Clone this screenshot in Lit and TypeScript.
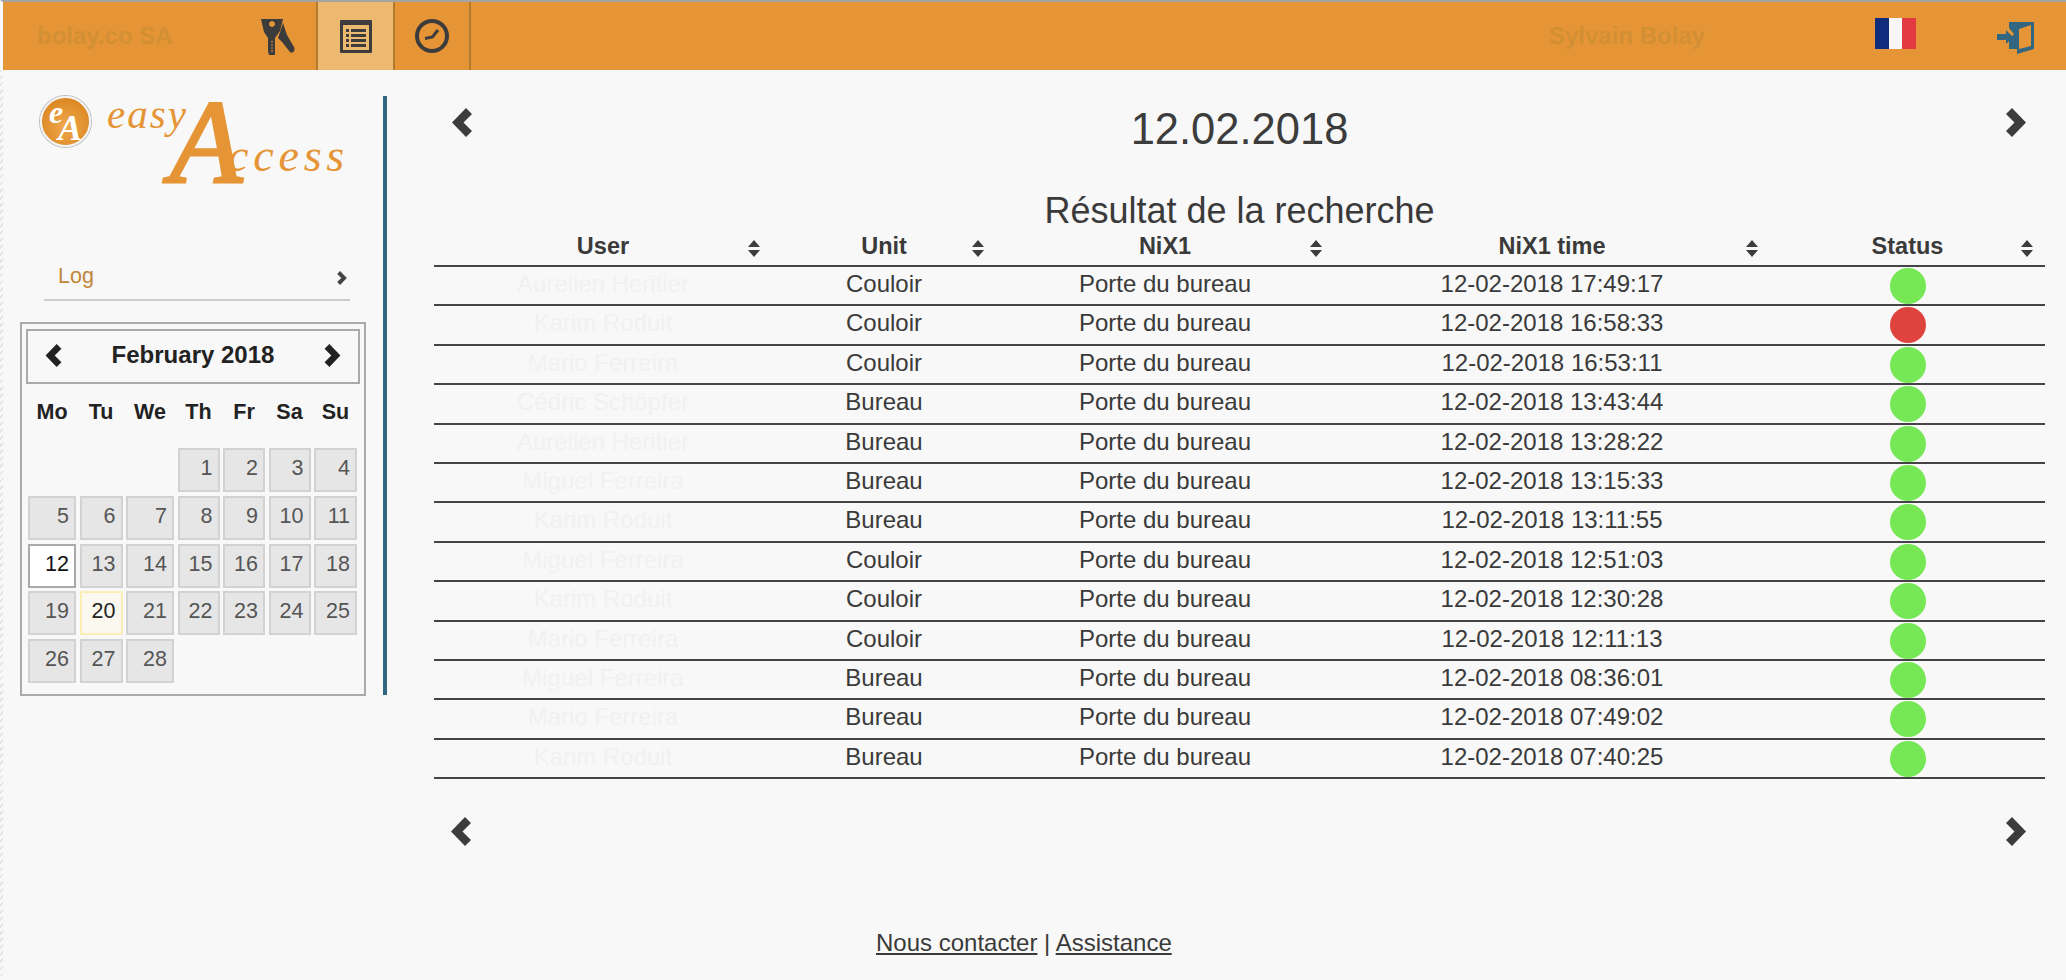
import { LitElement, html, css } from "lit";
import { customElement } from "lit/decorators.js";

const rows: [string, string, string, boolean][] = [
  ["Aurelien Heritier", "Couloir", "12-02-2018 17:49:17", true],
  ["Karim Roduit", "Couloir", "12-02-2018 16:58:33", false],
  ["Mario Ferreira", "Couloir", "12-02-2018 16:53:11", true],
  ["Cédric Schöpfer", "Bureau", "12-02-2018 13:43:44", true],
  ["Aurelien Heritier", "Bureau", "12-02-2018 13:28:22", true],
  ["Miguel Ferreira", "Bureau", "12-02-2018 13:15:33", true],
  ["Karim Roduit", "Bureau", "12-02-2018 13:11:55", true],
  ["Miguel Ferreira", "Couloir", "12-02-2018 12:51:03", true],
  ["Karim Roduit", "Couloir", "12-02-2018 12:30:28", true],
  ["Mario Ferreira", "Couloir", "12-02-2018 12:11:13", true],
  ["Miguel Ferreira", "Bureau", "12-02-2018 08:36:01", true],
  ["Mario Ferreira", "Bureau", "12-02-2018 07:49:02", true],
  ["Karim Roduit", "Bureau", "12-02-2018 07:40:25", true],
];

const chevL = (cls: string) => html`<svg class=${cls} viewBox="0 0 20 29"><path d="M0 14.5 14 0 20 6 11.5 14.5 20 23 14 29Z" fill="currentColor"/></svg>`;
const chevR = (cls: string) => html`<svg class=${cls} viewBox="0 0 20 29"><path d="M20 14.5 6 0 0 6 8.5 14.5 0 23 6 29Z" fill="currentColor"/></svg>`;
const sort = html`<svg class="sort" viewBox="0 0 14 17"><path d="M7 0 13 7H1ZM7 17 1 10H13Z" fill="#3c3c3c"/></svg>`;

@customElement("app-root")
export class AppRoot extends LitElement {
  static styles = css`
    :host { display: block; width: 2066px; height: 980px; overflow: hidden; background: #f8f8f8; font-family: "Liberation Sans", Arial, sans-serif; color: #3a3a3a; }
    .page { display: flex; flex-direction: column; height: 980px; border-top: 2px solid #a3a3a3; box-sizing: border-box; border-left: 3px solid transparent; position: relative; }
    .strip { position: absolute; left: -3px; top: 68px; bottom: 0; width: 3px; background: repeating-linear-gradient(135deg, #e6e6e6 0 2px, #f8f8f8 2px 5px); }
    .top { display: flex; height: 68px; background: #e59535; align-items: stretch; flex: none; }
    .org { width: 313px; box-sizing: border-box; padding-left: 34px; font-weight: 700; font-size: 24px; line-height: 68px; color: #d38f33; }
    .tab { width: 74px; border-right: 2px solid #b17a2e; display: flex; align-items: center; justify-content: center; }
    .tab.first { width: 0; }
    .tab.on { width: 75px; background: #ecb96e; }
    .keys { position: absolute; left: 258px; top: 16px; width: 36px; height: 38px; }
    .ico { width: 34px; height: 34px; display: block; }
    .name { margin-left: 1078px; width: 156px; white-space: nowrap; font-weight: 700; font-size: 24px; line-height: 68px; color: #d38f33; }
    .flag { margin-left: 170px; margin-top: 16px; width: 41px; height: 31px; display: flex; }
    .flag i { flex: 1; }
    .flag .b { background: #0f2d7c; }
    .flag .w { background: #f9f6f7; }
    .flag .c { background: #e23a40; }
    .exit { margin-left: 81px; margin-top: 19px; width: 38px; height: 34px; }
    .body { display: flex; flex: 1; min-height: 0; }
    .side { width: 384px; flex: none; box-sizing: border-box; height: 625px; padding-top: 26px; position: relative; }
    .bar { position: absolute; left: 380px; top: 26px; width: 4px; height: 599px; background: #336680; }
    .logo { position: relative; height: 126px; width: 360px; color: #e59535; font-family: "Liberation Serif", serif; font-style: italic; }
    .logo span { position: absolute; white-space: nowrap; line-height: 1; }
    .badge { left: 37px; top: 0; width: 51px; height: 51px; box-sizing: border-box; border-radius: 50%; background: radial-gradient(circle at 50% 60%, #f0a94e, #dd8a25 70%); border: 2px solid #f3f3f3; box-shadow: 0 0 0 1px #bdbdbd; }
    .badge-e { left: 46px; top: 0; font-size: 32px; color: #fff; font-weight: 700; }
    .badge-a { left: 55px; top: 14px; font-size: 36px; color: #fff; font-weight: 700; }
    .easy { left: 104px; top: -2px; font-size: 41px; letter-spacing: 2px; }
    .bigA { left: 167px; top: -12px; font-size: 118px; -webkit-text-stroke: 3px #e59535; }
    .ccess { left: 225px; top: 37px; font-size: 46px; letter-spacing: 4.8px; }
    .menu { margin: 25px 37px 0 41px; height: 54px; box-sizing: border-box; border-bottom: 2px solid #ccc; display: flex; justify-content: space-between; align-items: center; color: #c0873a; font-size: 21.5px; padding: 6px 3px 0 14px; }
    .menu svg { width: 10px; height: 14px; color: #444; margin-top: 4px; }
    .cal { margin: 21px 0 0 17px; width: 346px; height: 374px; box-sizing: border-box; border: 2px solid #aaa; padding: 5px 4px 0 4px; color: #222; }
    .cal-h { height: 55px; box-sizing: border-box; border: 2px solid #aaa; display: flex; align-items: center; justify-content: space-between; padding: 0 17px; font-weight: 700; font-size: 24px; }
    .cal-h span { margin-top: -4px; }
    .cal-h svg { width: 17px; height: 23px; margin-top: -2px; }
    .days { display: grid; grid-template-columns: 48px 43px 48px 42px 42px 42px 43px; column-gap: 3.5px; margin-left: 2px; }
    .wd { font-weight: 700; font-size: 21.5px; text-align: center; height: 64px; line-height: 57px; }
    .d { height: 44px; margin-bottom: 3.75px; box-sizing: border-box; background: #e6e6e6; border: 2px solid #d2d2d2; text-align: right; padding-right: 5px; font-size: 21.5px; line-height: 37px; color: #555; }
    .d.sel { background: #fff; border-color: #aaa; color: #111; }
    .d.today { background: #fbf8ef; border-color: #fbeeb4; color: #222; }
    .main { padding-left: 47px; width: 1611px; flex: none; }
    .nav { display: grid; grid-template-columns: 1fr auto 1fr; height: 98px; color: #3c3c3c; }
    .nav svg { width: 20px; height: 29px; margin: 38px 0 0 18px; }
    .nav svg.r { margin: 38px 19px 0 auto; display: block; }
    .date { font-size: 43.5px; line-height: 50px; margin-top: 34px; }
    h2 { margin: 23px 0 0; height: 0; font-weight: 400; font-size: 36px; line-height: 40px; text-align: center; color: #3a3a3a; }
    .tbl { display: block; padding-top: 43px; }
    .r { display: grid; grid-template-columns: 338px 224px 338px 436px 275px; text-align: center; font-size: 24px; }
    .hd { height: 31px; font-weight: 700; line-height: 25px; border-bottom: 2px solid #444; }
    .hd > div { position: relative; font-size: 23.5px; }
    .sort { position: absolute; width: 14px; height: 17px; top: 6px; right: 11px; }
    .row { height: 39.4px; box-sizing: border-box; border-bottom: 2px solid #444; line-height: 33px; white-space: nowrap; }
    .u { color: #f1f1f1; }
    .dot { display: block; width: 36px; height: 36px; border-radius: 50%; margin: 1px auto 0; }
    .g { background: #77e855; }
    .x { background: #de433d; }
    .pager { display: flex; justify-content: space-between; color: #3c3c3c; padding: 38px 19px 0 17px; }
    .pager svg { width: 20px; height: 29px; }
    .foot { margin: 82px 0 0 442px; font-size: 24px; line-height: 30px; white-space: nowrap; }
    .foot a { color: inherit; text-decoration: underline; }
  `;

  render() {
    const blanks = [0, 1, 2];
    const days = Array.from({ length: 28 }, (_, i) => i + 1);
    return html`<div class="page">
      <div class="strip"></div>
      <header class="top">
        <div class="org">bolay.co SA</div>
        <svg class="keys" viewBox="0 0 36 38">
          <path fill="#3c3c3c" fill-rule="evenodd" d="M0 1 22 1 19 13 14 20 14 37 8 37 7 33 7 20 3 14ZM11 3a3 3 0 1 0 .01 0Z"/>
          <path fill="#3c3c3c" d="M22 5 26 17 33 29C35 33 31 36 29 34L21 24 17 20Z"/>
          <path stroke="#e59535" stroke-width="1" d="M10 24h2M10 27h2M10 30h2M10 33h2"/>
        </svg>
        <div class="tab first"></div>
        <div class="tab on">
          <svg class="ico" viewBox="0 0 34 34"><rect x="1" y="1" width="32" height="33" rx="1" fill="#3c3c3c"/><rect x="4" y="6" width="26" height="25" fill="#ecb96e"/><path fill="#3c3c3c" d="M7 10h3v3H7zM12 10h15v3H12zM7 15h3v3H7zM12 15h15v3H12zM7 20h3v3H7zM12 20h15v3H12zM7 25h3v3H7zM12 25h15v3H12z"/></svg>
        </div>
        <div class="tab">
          <svg class="ico" viewBox="0 0 34 34"><circle cx="17" cy="17" r="15" fill="none" stroke="#3c3c3c" stroke-width="4"/><path d="M10 19.5 17.5 18 23 11" fill="none" stroke="#3c3c3c" stroke-width="3"/></svg>
        </div>
        <div class="name">Sylvain Bolay</div>
        <div class="flag"><i class="b"></i><i class="w"></i><i class="c"></i></div>
        <svg class="exit" viewBox="0 0 38 34">
          <path fill="#336680" d="M12 1H37V28L20 33V28H12V19L17 13 12 7Z"/>
          <path fill="#e59535" d="M22 8 34 4V25L22 28Z"/>
          <path fill="#336680" d="M0 13H9V9L16 16 9 23V19H0Z"/>
        </svg>
      </header>
      <div class="body">
        <aside class="side">
          <div class="bar"></div>
          <div class="logo" aria-label="easy Access">
            <span class="badge"></span><span class="badge-e">e</span><span class="badge-a">A</span>
            <span class="easy">easy</span><span class="bigA">A</span><span class="ccess">ccess</span>
          </div>
          <div class="menu"><span>Log</span>${chevR("")}</div>
          <div class="cal">
            <div class="cal-h">${chevL("")}<span>February 2018</span>${chevR("")}</div>
            <div class="days">
              ${["Mo", "Tu", "We", "Th", "Fr", "Sa", "Su"].map((w) => html`<div class="wd">${w}</div>`)}
              ${blanks.map(() => html`<div></div>`)}
              ${days.map((d) => html`<div class="d ${d === 12 ? "sel" : d === 20 ? "today" : ""}">${d}</div>`)}
            </div>
          </div>
        </aside>
        <main class="main">
          <div class="nav">${chevL("")}<div class="date">12.02.2018</div>${chevR("r")}</div>
          <h2>Résultat de la recherche</h2>
          <div class="tbl">
            <div class="r hd">
              ${["User", "Unit", "NiX1", "NiX1 time", "Status"].map((h) => html`<div>${h}${sort}</div>`)}
            </div>
            ${rows.map((r) => html`<div class="r row">
              <div class="u">${r[0]}</div><div>${r[1]}</div><div>Porte du bureau</div><div>${r[2]}</div>
              <div><span class="dot ${r[3] ? "g" : "x"}"></span></div>
            </div>`)}
          </div>
          <div class="pager">${chevL("")}${chevR("")}</div>
          <div class="foot"><a href="#">Nous contacter</a> | <a href="#">Assistance</a></div>
        </main>
      </div>
    </div>`;
  }
}
